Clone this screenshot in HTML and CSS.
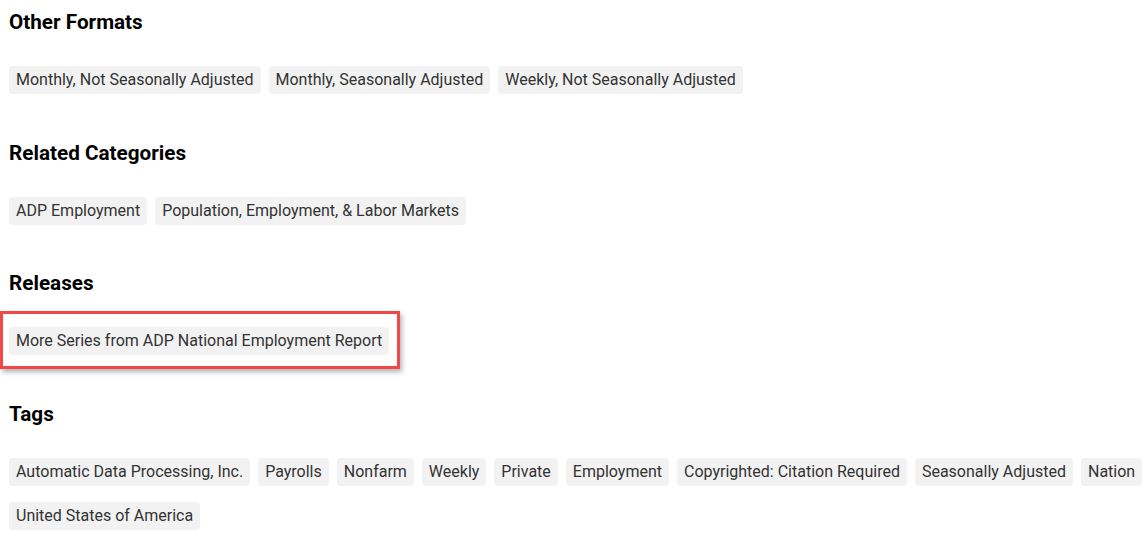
FILE: index.html
```html
<!DOCTYPE html>
<html lang="en">
<head>
    <meta charset="UTF-8">
    <meta name="viewport" content="width=device-width, initial-scale=1.0">
    <title>Series Details</title>
    <link rel="stylesheet" href="styles.css">
</head>
<body>
    <div class="section">
        <h2>Other Formats</h2>
        <div class="tags">
            <a class="tag" href="#">Monthly, Not Seasonally Adjusted</a>
            <a class="tag" href="#">Monthly, Seasonally Adjusted</a>
            <a class="tag" href="#">Weekly, Not Seasonally Adjusted</a>
        </div>
    </div>

    <div class="section">
        <h2>Related Categories</h2>
        <div class="tags">
            <a class="tag" href="#">ADP Employment</a>
            <a class="tag" href="#">Population, Employment, &amp; Labor Markets</a>
        </div>
    </div>

    <div class="section">
        <h2>Releases</h2>
        <div class="tags highlighted">
            <a class="tag" href="#">More Series from ADP National Employment Report</a>
        </div>
    </div>

    <div class="section">
        <h2>Tags</h2>
        <div class="tags">
            <a class="tag" href="#">Automatic Data Processing, Inc.</a>
            <a class="tag" href="#">Payrolls</a>
            <a class="tag" href="#">Nonfarm</a>
            <a class="tag" href="#">Weekly</a>
            <a class="tag" href="#">Private</a>
            <a class="tag" href="#">Employment</a>
            <a class="tag" href="#">Copyrighted: Citation Required</a>
            <a class="tag" href="#">Seasonally Adjusted</a>
            <a class="tag" href="#">Nation</a>
            <a class="tag" href="#">United States of America</a>
        </div>
    </div>
</body>
</html>
```

FILE: styles.css
```css
body {
    font-family: Roboto, 'Liberation Sans', sans-serif;
    margin: 0;
    padding: 8px 0 0 9px;
    background: #fff;
    color: #333;
}
.section {
    margin-bottom: 28.6px;
}
.section h2 {
    font-size: 20.7px;
    font-weight: 700;
    line-height: 28px;
    color: #000;
    margin: 0 0 30px;
}
.tags {
    display: flex;
    flex-wrap: wrap;
    column-gap: 8px;
    row-gap: 16px;
    padding-bottom: 16px;
}
.tag {
    display: block;
    background: #f2f2f2;
    color: #333;
    text-decoration: none;
    font-size: 16px;
    line-height: 20px;
    padding: 4px 7px;
    border-radius: 4px;
}
.highlighted {
    position: relative;
}
.highlighted::after {
    content: "";
    position: absolute;
    left: -9px;
    top: -16px;
    width: 400px;
    height: 58px;
    box-sizing: border-box;
    border: 3px solid #f24848;
    box-shadow: 2px 3px 5px rgba(0, 0, 0, 0.3);
    pointer-events: none;
}
```
